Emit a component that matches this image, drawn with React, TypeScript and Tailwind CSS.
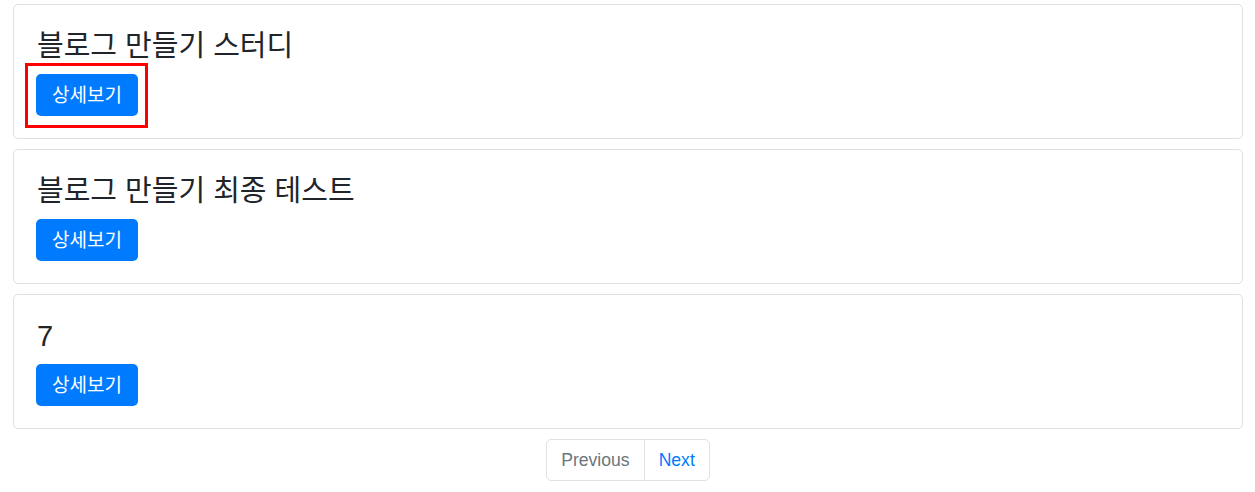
const POSTS = [
  { id: 1, title: '블로그 만들기 스터디', marked: true },
  { id: 2, title: '블로그 만들기 최종 테스트', marked: false },
  { id: 3, title: '7', marked: false },
];

const FONT = 'font-["Liberation_Sans","Noto_Sans_CJK_KR",sans-serif]';

const DetailButton = ({ marked }: { marked: boolean }) => (
  <div className="relative self-start">
    <button className="h-[42px] px-4 rounded-[5px] bg-[#007bff] text-white text-[19px] leading-none">
      상세보기
    </button>
    {marked && (
      <div className="absolute -left-[11px] -top-[11px] -right-[10px] -bottom-[12px] border-[3px] border-[#ff0000] pointer-events-none" />
    )}
  </div>
);

export default function App() {
  return (
    <div className={`${FONT} bg-white min-h-[492px] pt-[4px] pl-[13px] pr-[12px] text-[#212529]`}>
      <div className="flex flex-col gap-[10px]">
        {POSTS.map((post) => (
          <div
            key={post.id}
            className="flex flex-col h-[135px] border border-[#dfdfdf] rounded-[5px] px-[22px] pt-[22px]"
          >
            <h3 className="text-[29px] leading-[38px] mb-[9px] pl-[1px]">{post.title}</h3>
            <DetailButton marked={post.marked} />
          </div>
        ))}
      </div>

      {/* Pagination */}
      <div className="flex justify-center mt-[10px]">
        <div className="flex h-[42px] border border-[#dee2e6] rounded-[5px] text-[17.6px]">
          <span className="flex items-center px-[14px] text-[#6c757d]">Previous</span>
          <span className="flex items-center px-[14px] text-[#007bff] border-l border-[#dee2e6]">Next</span>
        </div>
      </div>
    </div>
  );
}
